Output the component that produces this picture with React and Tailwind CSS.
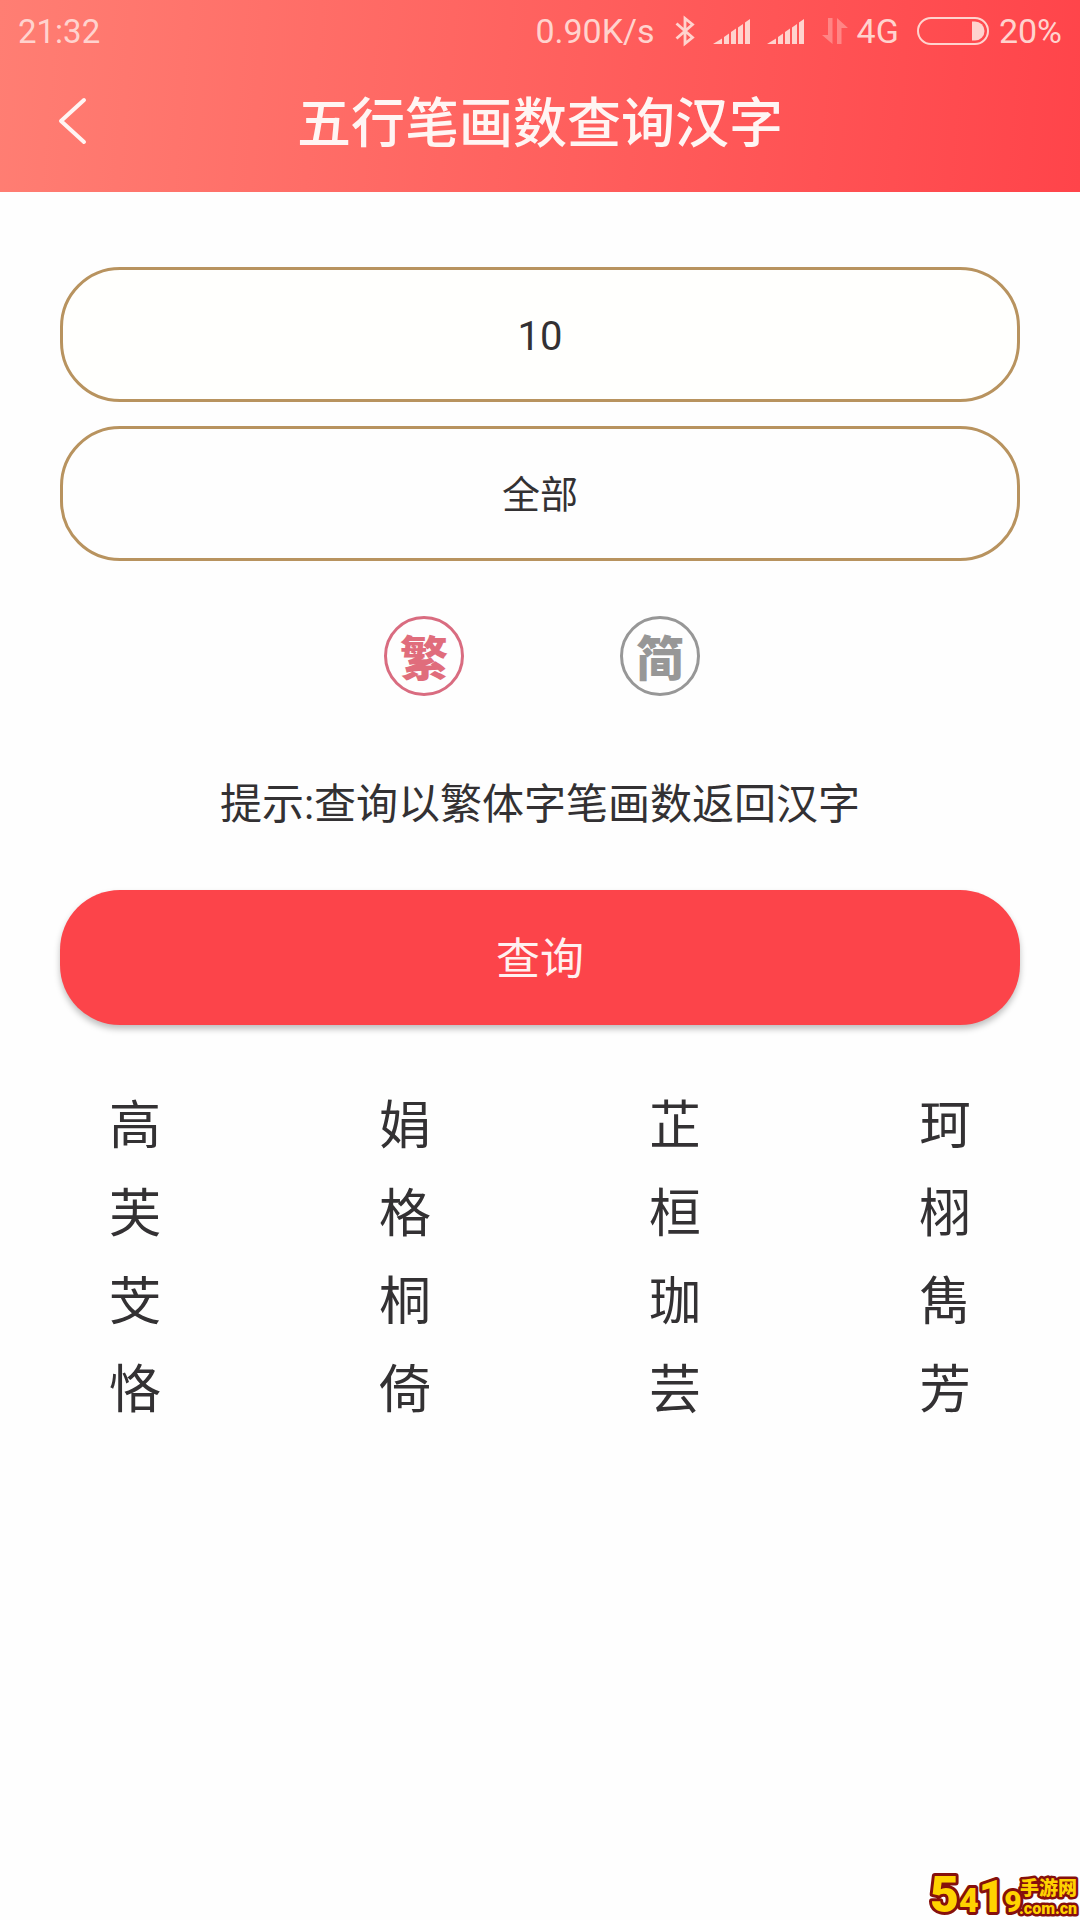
import { useState } from "react";

const RESULTS = [
  "高", "娟", "芷", "珂",
  "芙", "格", "桓", "栩",
  "芠", "桐", "珈", "雋",
  "恪", "倚", "芸", "芳",
];

const ELEMENTS = ["全部", "金", "木", "水", "火", "土"];

function BluetoothIcon() {
  return (
    <svg className="w-5 h-8" viewBox="0 0 20 32" fill="none" stroke="currentColor" strokeWidth="2.8">
      <path d="M1.5 8.500 17.500 22.500 10 28.500V3.500L17.500 9.500 1.500 23.500" />
    </svg>
  );
}

function SignalIcon() {
  return (
    <svg className="w-[38px] h-7" viewBox="0 0 38 28" fill="currentColor">
      <path d="M0 27 9 21.500V27z" />
      <path d="M11 20 16 16.500V27H11z" />
      <path d="M18 15 23 11.500V27H18z" />
      <path d="M25 10.500 30 7V27H25z" />
      <path d="M32 5.500 37 2V27H32z" />
    </svg>
  );
}

function DataArrows() {
  return (
    <svg className="w-7 h-8 opacity-40" viewBox="0 0 28 32" fill="currentColor">
      <path d="M7 3H11.500v26L1 20H7z" />
      <path d="M16 29H20.500V13H27L16 3z" />
    </svg>
  );
}

function BatteryIcon() {
  return (
    <svg className="w-[72px] h-7" viewBox="0 0 72 28">
      <rect x="1" y="1" width="70" height="26" rx="13" fill="none" stroke="currentColor" strokeWidth="2" />
      <path d="M55 4.500h3a9.500 9.500 0 0 1 0 19h-3z" fill="currentColor" />
    </svg>
  );
}

function StatusBar() {
  return (
    <div className="h-[62px] flex items-center justify-between px-[18px] text-[33px] leading-none text-[#ffd3ce]">
      <span>21:32</span>
      <div className="flex items-center text-[34px]">
        <span>0.90K/s</span>
        <span className="ml-5"><BluetoothIcon /></span>
        <span className="ml-[18px]"><SignalIcon /></span>
        <span className="ml-4"><SignalIcon /></span>
        <span className="ml-4"><DataArrows /></span>
        <span className="ml-2">4G</span>
        <span className="ml-[18px]"><BatteryIcon /></span>
        <span className="ml-2.5">20%</span>
      </div>
    </div>
  );
}

function ScriptOption({ value, label, checked, onChange }) {
  return (
    <label className="cursor-pointer">
      <input
        type="radio"
        name="script"
        value={value}
        checked={checked}
        onChange={() => onChange(value)}
        className="sr-only peer"
      />
      <span className="w-20 h-20 pt-2 rounded-full border-[3px] flex items-center justify-center text-5xl leading-none font-black border-[#979797] text-[#979797] peer-checked:border-[#d96c80] peer-checked:text-[#e06d7c]">
        {label}
      </span>
    </label>
  );
}

function SiteLogo() {
  return (
    <svg
      className="w-[152px] h-[54px]"
      viewBox="0 0 152 54"
      fill="#ffd200"
      stroke="#86100c"
      strokeWidth="6"
      strokeLinejoin="round"
      paintOrder="stroke"
      fontWeight="900"
    >
      <text x="2" y="46">
        <tspan fontSize="50">5</tspan>
        <tspan fontSize="34">4</tspan>
        <tspan fontSize="44">1</tspan>
        <tspan fontSize="30">9</tspan>
      </text>
      <text x="92" y="29" fontSize="19" strokeWidth="5">手游网</text>
      <text x="91" y="48" fontSize="16" strokeWidth="5">.com.cn</text>
    </svg>
  );
}

export default function App() {
  const [strokes, setStrokes] = useState("10");
  const [element, setElement] = useState("全部");
  const [script, setScript] = useState("traditional");

  return (
    <div className="relative min-h-screen flex flex-col bg-[#fefefe] text-[#333133] font-['Roboto','Noto_Sans_CJK_SC',sans-serif]">
      {/* Header */}
      <header className="bg-linear-[95deg] from-[#ff7e73] to-[#ff444a] pb-3">
        <StatusBar />
        <div className="h-[118px] grid grid-cols-[144px_1fr_144px] items-center">
          <button type="button" aria-label="返回" className="h-full pl-14 text-[#fff5f3]">
            <svg className="w-8 h-12" viewBox="0 0 32 48" fill="none" stroke="currentColor" strokeWidth="4" strokeLinecap="round" strokeLinejoin="round">
              <path d="M28 3 5 24 28 45" />
            </svg>
          </button>
          <h1 className="pt-2 text-center text-[54px] leading-none font-medium text-[#fff5f3]">五行笔画数查询汉字</h1>
        </div>
      </header>

      {/* Query form */}
      <form className="px-15 pt-[75px] flex flex-col" onSubmit={(e) => e.preventDefault()}>
        <input
          type="text"
          inputMode="numeric"
          aria-label="笔画数"
          value={strokes}
          onChange={(e) => setStrokes(e.target.value)}
          className="w-full h-[135px] pt-1 rounded-[60px] border-[3px] border-[#b8935f] bg-[#fffffd] text-center text-[40px] outline-none"
        />
        <select
          aria-label="五行"
          value={element}
          onChange={(e) => setElement(e.target.value)}
          className="mt-6 w-full h-[135px] pt-1 rounded-[60px] border-[3px] border-[#b8935f] bg-[#fefefe] appearance-none text-center [text-align-last:center] text-[38px] outline-none"
        >
          {ELEMENTS.map((name) => (
            <option key={name}>{name}</option>
          ))}
        </select>

        <div className="mt-[55px] pl-1 flex justify-center gap-[156px]">
          <ScriptOption value="traditional" label="繁" checked={script === "traditional"} onChange={setScript} />
          <ScriptOption value="simplified" label="简" checked={script === "simplified"} onChange={setScript} />
        </div>

        <p className="mt-[79px] text-center text-[42px] leading-[60px]">提示:查询以繁体字笔画数返回汉字</p>

        <button
          type="submit"
          className="mt-[55px] h-[135px] pt-1 rounded-[60px] bg-[#fc444a] text-[44px] text-[#fff0f0] shadow-[0_4px_6px_rgba(0,0,0,0.25)]"
        >
          查询
        </button>
      </form>

      {/* Matching characters */}
      <ul className="mt-[58px] grid grid-cols-4 text-center text-[52px] leading-[88px]">
        {RESULTS.map((char) => (
          <li key={char}>{char}</li>
        ))}
      </ul>

      <div className="absolute right-0 bottom-0">
        <SiteLogo />
      </div>
    </div>
  );
}
